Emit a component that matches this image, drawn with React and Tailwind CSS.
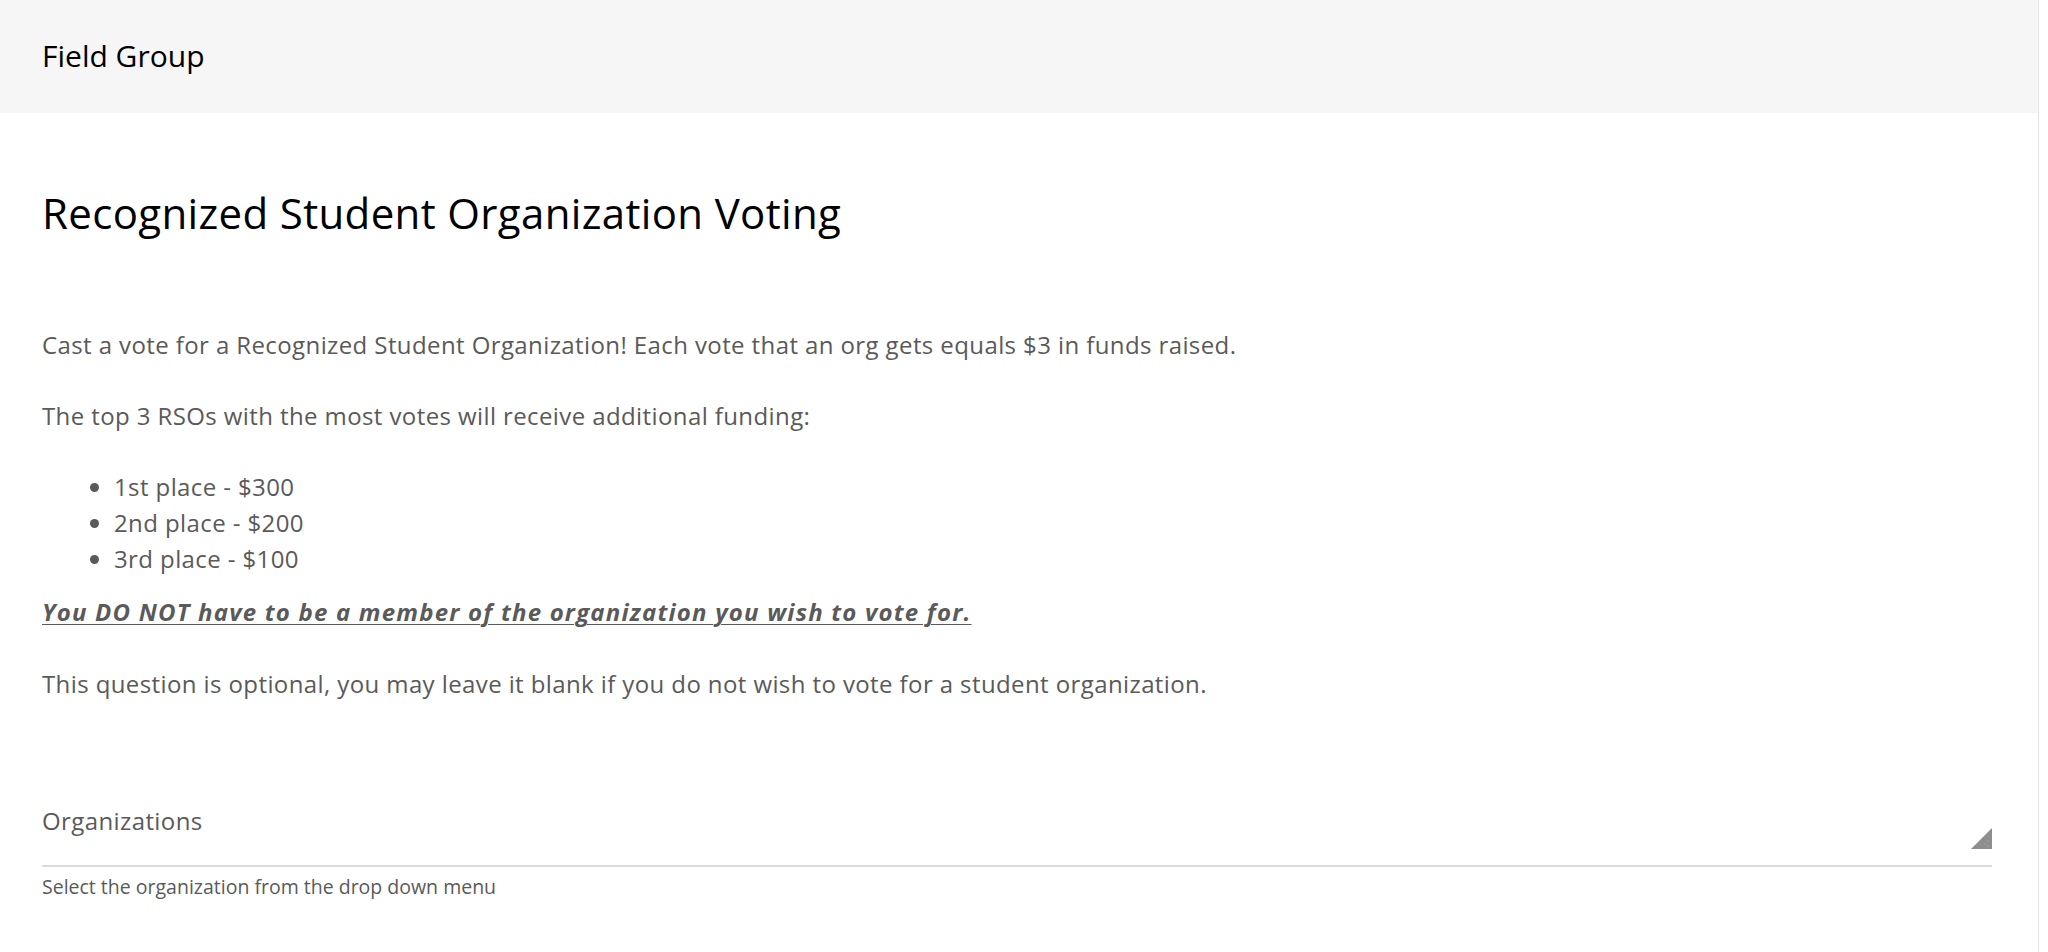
import React from 'react';

const items = ['1st place - $300', '2nd place - $200', '3rd place - $100'];

const SelectCorner = () => (
  <svg width="21" height="21" viewBox="0 0 21 21" className="mt-[25px] shrink-0">
    <polygon points="0,21 21,0 21,21" fill="#8e8e8e" />
    <circle cx="14" cy="16" r="0.6" fill="#b5b5b5" />
    <circle cx="17" cy="13" r="0.6" fill="#b5b5b5" />
    <circle cx="17" cy="18" r="0.6" fill="#b5b5b5" />
  </svg>
);

export default function App() {
  return (
    <div className="w-[2039px] bg-white border-r border-b border-[#e6e6e6] font-['Open_Sans',sans-serif]">
      {/* header band */}
      <div className="h-[113px] bg-[#f6f6f6] flex items-center pl-[42px]">
        <span className="text-[30px] text-black leading-[1.362]">Field Group</span>
      </div>

      <div className="pl-[42px] pr-[46px] pt-[75px] pb-[51px]">
        <h1 className="text-[42px] leading-[50px] text-black font-normal tracking-[0.35px]">
          Recognized Student Organization Voting
        </h1>

        <div className="mt-[89px] text-[24px] leading-[36px] text-[#5a5a5a] tracking-[0.4px]">
          <p>
            Cast a vote for a Recognized Student Organization! Each vote that an org gets equals $3 in funds raised.
          </p>
          <p className="mt-[35px]">The top 3 RSOs with the most votes will receive additional funding:</p>
          <ul className="mt-[35px] list-disc pl-[72px]">
            {items.map(item => (
              <li key={item}>{item}</li>
            ))}
          </ul>
          <p className="mt-[17px] font-bold italic underline underline-offset-[3px] decoration-1 tracking-[1.2px]">
            You DO NOT have to be a member of the organization you wish to vote for.
          </p>
          <p className="mt-[36px]">
            This question is optional, you may leave it blank if you do not wish to vote for a student organization.
          </p>
        </div>

        {/* select field */}
        <div className="mt-[101px] flex items-start justify-between pb-[16px] border-b-2 border-[#dadada]">
          <span className="text-[24px] leading-[36px] text-[#5a5a5a] tracking-[0.4px]">Organizations</span>
          <SelectCorner />
        </div>
        <p className="mt-[5px] text-[19.5px] leading-[29px] text-[#5a5a5a]">
          Select the organization from the drop down menu
        </p>
      </div>
    </div>
  );
}
